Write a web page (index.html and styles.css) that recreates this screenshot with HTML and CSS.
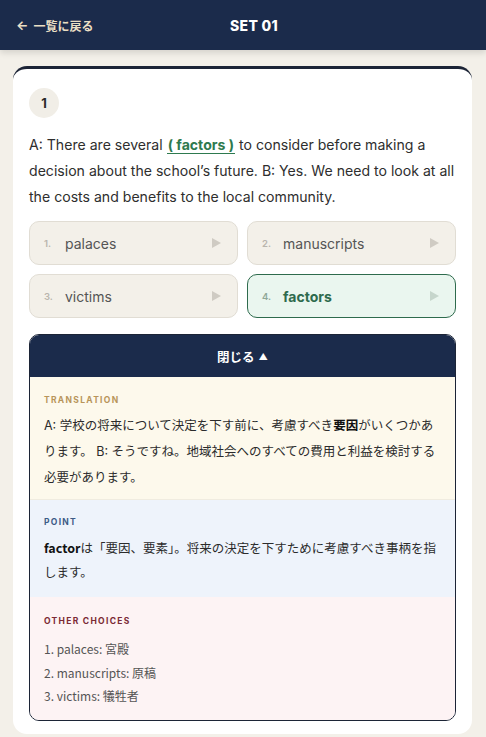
FILE: index.html
```html
<!DOCTYPE html>
<html lang="ja">
<head>
<meta charset="utf-8">
<link rel="stylesheet" href="styles.css">
</head>
<body>
<header class="topbar">
  <a class="back"><span class="back-arrow">←</span> 一覧に戻る</a>
  <h1 class="title">SET 01</h1>
  <span class="spacer"></span>
</header>
<main class="page">
  <section class="card">
    <div class="qnum">1</div>
    <p class="question">A: There are several <span class="blank">( factors )</span> to consider before making a decision about the school’s future. B: Yes. We need to look at all the costs and benefits to the local community.</p>
    <div class="choices">
      <button class="choice"><span class="cnum">1.</span><span class="clabel">palaces</span><span class="play"></span></button>
      <button class="choice"><span class="cnum">2.</span><span class="clabel">manuscripts</span><span class="play"></span></button>
      <button class="choice"><span class="cnum">3.</span><span class="clabel">victims</span><span class="play"></span></button>
      <button class="choice correct"><span class="cnum">4.</span><span class="clabel">factors</span><span class="play"></span></button>
    </div>
    <div class="explain">
      <div class="explain-head">閉じる <span class="tri">▲</span></div>
      <div class="sec sec-tr">
        <div class="sec-label">TRANSLATION</div>
        <p class="sec-text">A: 学校の将来について決定を下す前に、考慮すべき<b>要因</b>がいくつかあります。 B: そうですね。地域社会へのすべての費用と利益を検討する必要があります。</p>
      </div>
      <div class="sec sec-pt">
        <div class="sec-label">POINT</div>
        <p class="sec-text pt-text"><b>factor</b>は「要因、要素」。将来の決定を下すために考慮すべき事柄を指します。</p>
      </div>
      <div class="sec sec-oc">
        <div class="sec-label">OTHER CHOICES</div>
        <ul class="oc-list">
          <li>1. palaces: 宮殿</li>
          <li>2. manuscripts: 原稿</li>
          <li>3. victims: 犠牲者</li>
        </ul>
      </div>
    </div>
  </section>
</main>
</body>
</html>
```
FILE: styles.css
```css
* { box-sizing: border-box; }
html, body { margin: 0; padding: 0; }
body {
  background: #f3f0e9;
  font-family: Inter, "Noto Sans CJK JP", sans-serif;
  color: #2b2b2b;
  overflow: hidden;
}
.topbar {
  height: 50px;
  background: #1b2b4b;
  display: flex;
  align-items: center;
  justify-content: space-between;
  padding: 0 16px;
  box-shadow: 0 3px 6px rgba(0,0,0,0.12);
  position: relative;
}
.back {
  width: 100px;
  color: #eadfc4;
  font-size: 12px;
  font-weight: 700;
  font-family: Inter, "Noto Sans CJK JP", sans-serif;
  display: flex;
  align-items: center;
  gap: 5px;
}
.back-arrow { font-size: 13px; font-weight: 700; }
.title {
  margin: 0;
  color: #ffffff;
  font-size: 14px;
  font-weight: 800;
  letter-spacing: 0.3px;
}
.spacer { width: 78px; }
.page {
  padding: 16px 14px 0 13px;
}
.card {
  background: #ffffff;
  border-top: 3px solid #1c2436;
  border-radius: 14px;
  padding: 19px 16px 13px 16px;
}
.qnum {
  width: 30px;
  height: 30px;
  border-radius: 50%;
  background: #f1eee7;
  display: flex;
  align-items: center;
  justify-content: center;
  font-size: 13px;
  font-weight: 700;
  color: #2a2a2a;
}
.question {
  margin: 14px 0 11px 0;
  font-size: 14.1px;
  line-height: 26px;
  color: #2e2e2e;
}
.blank {
  color: #2e7a4f;
  font-weight: 700;
  border-bottom: 1.5px solid #2e7a4f;
  padding: 0 1px;
}
.choices {
  display: grid;
  grid-template-columns: 1fr 1fr;
  gap: 9px 9px;
}
.choice {
  height: 44px;
  background: #f3f0e9;
  border: 1px solid #e1ddd4;
  border-radius: 10px;
  display: flex;
  align-items: center;
  padding: 0 16px 0 14px;
  font-family: Inter, sans-serif;
  text-align: left;
}
.cnum {
  font-size: 9.5px;
  font-weight: 600;
  color: #b9b5ad;
  width: 21px;
}
.clabel {
  flex: 1;
  font-size: 14px;
  color: #555555;
}
.play {
  width: 0; height: 0;
  border-left: 9px solid #cfcbc3;
  border-top: 5px solid transparent;
  border-bottom: 5px solid transparent;
}
.choice.correct {
  background: #eaf6ef;
  border-color: #2e6b4d;
}
.choice.correct .clabel {
  color: #2e6b4d;
  font-weight: 700;
}
.choice.correct .cnum { color: #8fa898; }
.choice.correct .play { border-left-color: #c6d6cc; }
.explain {
  margin-top: 16px;
  border: 1px solid #1c2436;
  border-radius: 10px;
  overflow: hidden;
}
.explain-head {
  background: #1b2b4b;
  color: #ffffff;
  height: 42px;
  display: flex;
  align-items: center;
  justify-content: center;
  gap: 4px;
  font-size: 12.5px;
  font-weight: 700;
}
.tri { font-size: 9px; }
.sec {
  padding: 18px 14px 8px 14px;
}
.sec-tr { background: #fdf9ec; border-bottom: 1px solid #f0ece0; }
.sec-pt { background: #eef3fb; padding-top: 17px; padding-bottom: 13px; }
.sec-oc { background: #fdf3f4; padding-top: 19px; padding-bottom: 12px; }
.sec-label {
  font-size: 8.5px;
  font-weight: 700;
  letter-spacing: 1.3px;
  font-family: Inter, sans-serif;
}
.sec-tr .sec-label { color: #b8955a; }
.sec-pt .sec-label { color: #3d5b86; }
.sec-oc .sec-label { color: #7b2a35; }
.sec-text {
  margin: 8px 0 0 0;
  font-size: 12.5px;
  line-height: 26px;
  color: #2b2b2b;
  font-family: Inter, "Noto Sans CJK JP", sans-serif;
}
.sec-text b { font-weight: 700; color: #111; }
.pt-text {
  font-family: "Noto Sans CJK JP", sans-serif;
  line-height: 24px;
  margin-top: 9px;
}
.oc-list {
  list-style: none;
  margin: 11px 0 0 0;
  padding: 0;
  font-family: "Noto Sans CJK JP", sans-serif;
  font-size: 12px;
  color: #555555;
}
.oc-list li { line-height: 23.5px; }
```
